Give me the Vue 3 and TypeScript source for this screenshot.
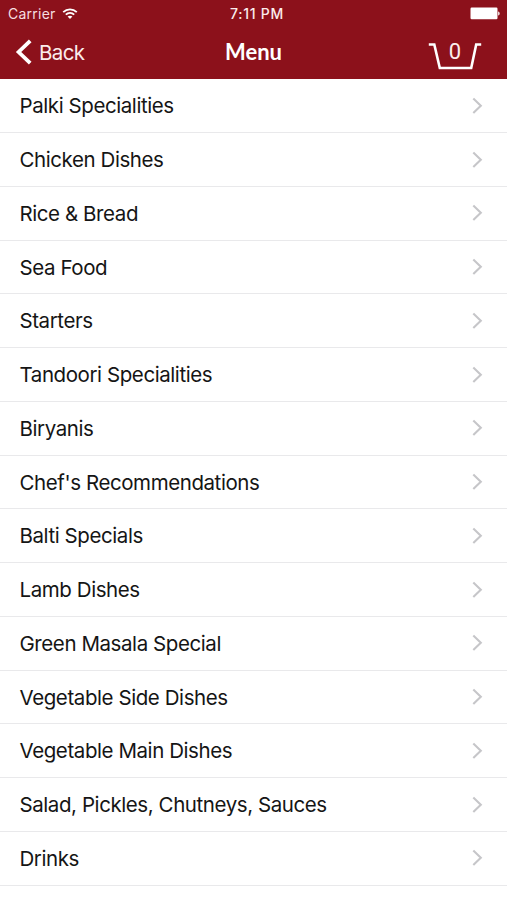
<script setup lang="ts">
const categories: string[] = [
  'Palki Specialities',
  'Chicken Dishes',
  'Rice & Bread',
  'Sea Food',
  'Starters',
  'Tandoori Specialities',
  'Biryanis',
  "Chef's Recommendations",
  'Balti Specials',
  'Lamb Dishes',
  'Green Masala Special',
  'Vegetable Side Dishes',
  'Vegetable Main Dishes',
  'Salad, Pickles, Chutneys, Sauces',
  'Drinks',
]
const basketCount = 0
</script>

<template>
  <div class="screen">
    <header class="header">
      <div class="status">
        <div class="carrier">
          <span>Carrier</span>
          <svg class="wifi" width="16" height="12" viewBox="0 0 16 12" fill="none" stroke="#fff" stroke-width="1.8">
            <path d="M1.2 4.1C5.1.4 10.9.4 14.8 4.1" />
            <path d="M3.8 6.7C6.2 4.4 9.8 4.4 12.2 6.7" />
            <path d="M8 11.1 5.6 8.6C7 7.4 9 7.4 10.4 8.6Z" fill="#fff" stroke="none" />
          </svg>
        </div>
        <time class="time">7:11 PM</time>
        <svg class="battery" width="30" height="13" viewBox="0 0 30 13" fill="#fff">
          <rect x="0.5" y="0.5" width="27" height="11.8" rx="1.2" />
          <path d="M28.2 4.4C30.1 4.9 30.1 8 28.2 8.5Z" />
        </svg>
      </div>
      <nav class="navbar">
        <button class="back" type="button">
          <svg width="18" height="26" viewBox="0 0 18 26" fill="none" stroke="#fff" stroke-width="3.8">
            <path d="M16.2 1.8 4.6 13 16.2 24.2" />
          </svg>
          <span>Back</span>
        </button>
        <h1 class="title">Menu</h1>
        <button class="basket" type="button">
          <svg width="54" height="28" viewBox="0 0 54 28" fill="none" stroke="#fff" stroke-width="2.6">
            <path d="M0.8 2.5H6.3L11.8 26H43.2L48.2 2.5H53.2" />
          </svg>
          <span class="count">{{ basketCount }}</span>
        </button>
      </nav>
    </header>
    <ul class="list">
      <li v-for="name in categories" :key="name" class="row">
        <span class="name">{{ name }}</span>
        <svg width="11" height="18" viewBox="0 0 11 18" fill="none" stroke="#c6c6c9" stroke-width="2.1">
          <path d="M1.3 1.5 8.8 8.7 1.3 15.9" />
        </svg>
      </li>
    </ul>
  </div>
</template>

<style>
body {
  background: #fff;
}
</style>

<style scoped>
.screen {
  height: 900px;
  overflow: hidden;
  background: #fff;
  font-family: Inter, 'Liberation Sans', sans-serif;
  color: #151515;
}
.header {
  box-sizing: border-box;
  height: 79.4px;
  background: #8c111b;
  color: #fff;
}
.status {
  display: grid;
  grid-template-columns: 1fr auto 1fr;
  align-items: center;
  height: 27px;
  padding: 0 7px 0 8px;
  font-size: 14px;
}
.carrier {
  display: flex;
  align-items: center;
  gap: 6px;
  letter-spacing: 0.25px;
  color: #f6dfe0;
}
.time {
  padding-left: 6px;
  font-weight: 500;
  letter-spacing: 0.7px;
  color: #fbecec;
}
.battery {
  justify-self: end;
}
.navbar {
  display: grid;
  grid-template-columns: 1fr auto 1fr;
  align-items: center;
  height: 50px;
  padding: 0 25px 0 14px;
}
.back,
.basket {
  border: 0;
  padding: 0;
  background: none;
  color: #fff;
  font: inherit;
}
.back {
  display: flex;
  align-items: center;
  gap: 7px;
  font-size: 20.5px;
  letter-spacing: -0.6px;
  color: #fbecec;
}
.title {
  margin: 0;
  padding-left: 11px;
  font: 700 22px/26px Lato, sans-serif;
}
.basket {
  display: grid;
  justify-self: end;
  width: 54px;
  height: 28px;
  margin-top: 7px;
}
.basket > * {
  grid-area: 1 / 1;
}
.count {
  justify-self: center;
  font: 22px/20px Roboto, sans-serif;
  color: #fbecec;
}
.list {
  margin: 0;
  padding: 0;
  list-style: none;
}
.row {
  display: flex;
  align-items: center;
  justify-content: space-between;
  box-sizing: border-box;
  height: 53.75px;
  padding: 0 24px 0 19.5px;
  border-bottom: 1px solid #e9e9eb;
}
.name {
  padding-top: 0.2px;
  font-size: 20.5px;
  letter-spacing: -0.42px;
  white-space: nowrap;
}
</style>
